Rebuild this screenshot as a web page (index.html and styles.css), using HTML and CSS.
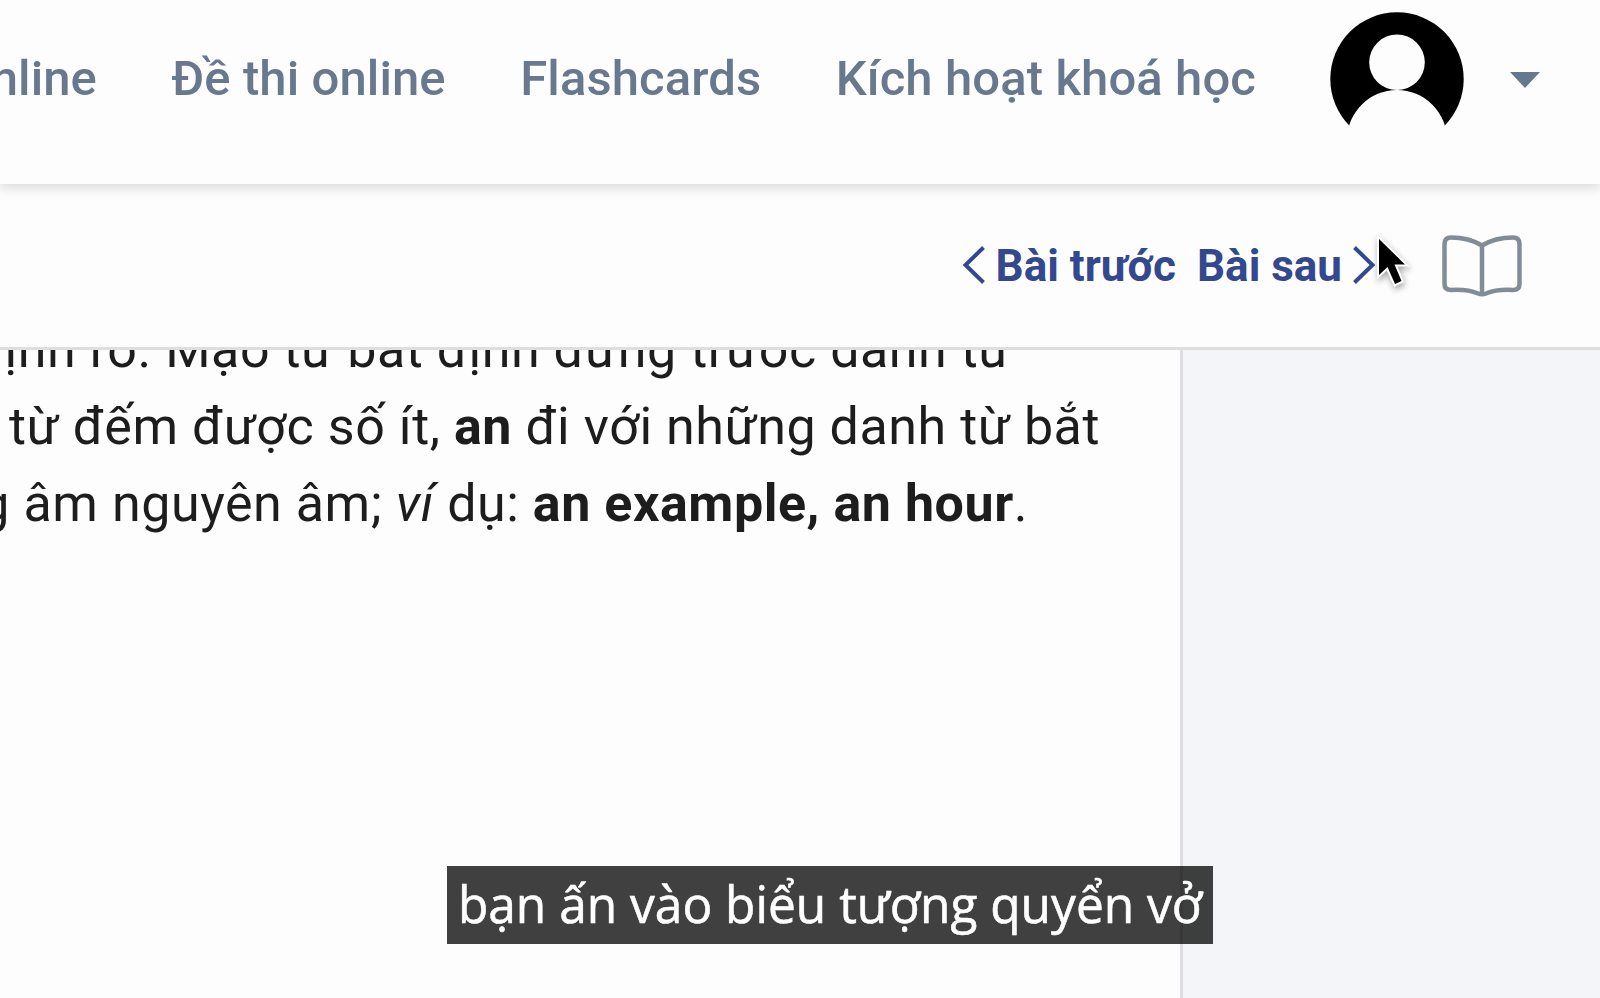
FILE: index.html
```html
<!DOCTYPE html>
<html lang="vi">
<head>
    <meta charset="UTF-8">
    <meta name="viewport" content="width=device-width, initial-scale=1.0">
    <title>Bài học</title>
    <link rel="stylesheet" href="styles.css">
</head>
<body>
    <header class="topbar">
        <nav class="menu">
            <a class="menu-first">online</a>
            <a class="menu-exam">Đề thi online</a>
            <a class="menu-cards">Flashcards</a>
            <a class="menu-active">Kích hoạt khoá học</a>
        </nav>
        <svg class="avatar" viewBox="0 0 134 134">
            <circle cx="67" cy="67" r="66.7" fill="#000"/>
            <circle cx="67" cy="50.3" r="27.8" fill="#fdfdfd"/>
            <path d="M17 134 V128 A50 50 0 0 1 117 128 V134 Z" fill="#fdfdfd"/>
        </svg>
        <svg class="caret" viewBox="0 0 30 16"><path d="M0 0H30L15 16Z" fill="#64788f"/></svg>
    </header>

    <div class="lesson-bar">
        <a class="lesson-link">
            <svg class="chevron" viewBox="0 0 24 38"><path d="M21.500 1.500L3.500 19L21.500 36.500"/></svg>
            <span class="prev">Bài trước</span>
        </a>
        <a class="lesson-link">
            <span class="next">Bài sau</span>
            <svg class="chevron" viewBox="0 0 24 38"><path d="M2.500 1.500L20.500 19L2.500 36.500"/></svg>
        </a>
        <svg class="book" viewBox="0 0 80 64">
            <path d="M40 11.500C31 6 19 3.500 9 3.500Q2.500 3.500 2.500 10V50Q2.500 56 9 56C19 55.500 29 56.500 36 59.500Q40 61 44 59.500C51 56.500 61 55.500 71 56Q77.500 56 77.500 50V10Q77.500 3.500 71 3.500C61 3.500 49 6 40 11.500ZM40 11.500V60"/>
        </svg>
    </div>

    <main class="page">
        <article class="content">
            <p class="line line-1">định rõ. Mạo từ bất định đứng trước danh từ</p>
            <p class="line line-2">từ đếm được số ít, <b>an</b> đi với những danh từ bắt</p>
            <p class="line line-3">g âm nguyên âm; <i>ví</i> dụ: <b>an example, an hour</b>.</p>
        </article>
        <aside class="sidebar"></aside>
    </main>

    <div class="subtitle"><span>bạn ấn vào biểu tượng quyển vở</span></div>

    <svg class="cursor" viewBox="0 0 40 60">
        <path d="M6 9V45L14.500 37L22 54L28.500 51L21.500 34.500H32Z"/>
    </svg>
</body>
</html>
```
FILE: styles.css
```css
* {
    box-sizing: border-box;
}
body {
    margin: 0;
    height: 998px;
    overflow: hidden;
    display: flex;
    flex-direction: column;
    font-family: Roboto, "Noto Sans", sans-serif;
    background-color: #fdfdfd;
    position: relative;
}

/* top menu */
.topbar {
    flex: none;
    height: 184px;
    display: flex;
    justify-content: flex-end;
    align-items: flex-start;
    padding-top: 12px;
    padding-right: 60px;
    background-color: #fdfdfd;
    box-shadow: 0 3px 12px 1px rgba(0, 0, 0, 0.14);
    z-index: 2;
}
.menu {
    display: flex;
    gap: 74.5px;
    margin-right: 74px;
    padding-top: 37px;
    font-size: 49px;
    line-height: 60px;
    font-weight: 500;
    letter-spacing: 0.1px;
    color: #67788f;
    white-space: nowrap;
}
.avatar {
    flex: none;
    width: 134px;
    height: 134px;
}
.caret {
    flex: none;
    width: 30px;
    height: 16px;
    margin-top: 60px;
    margin-left: 46px;
}

/* previous / next lesson */
.lesson-bar {
    flex: none;
    height: 166px;
    display: flex;
    justify-content: flex-end;
    padding-top: 50px;
    padding-right: 78px;
    background-color: #fdfdfd;
    border-bottom: 3px solid #dedede;
    z-index: 1;
}
.lesson-link {
    display: flex;
    height: 64px;
    margin-left: 21px;
    font-size: 44px;
    line-height: 64px;
    font-weight: 700;
    color: #33488f;
    white-space: nowrap;
}
.chevron {
    width: 24px;
    height: 38px;
    margin-top: 12px;
    fill: none;
    stroke: #33488f;
    stroke-width: 4;
}
.prev {
    margin-left: 10px;
}
.next {
    margin-right: 10px;
}
.book {
    width: 80px;
    height: 64px;
    margin-left: 66px;
    fill: none;
    stroke: #818c98;
    stroke-width: 4.5;
}

/* lesson text */
.page {
    flex: 1;
    display: flex;
    overflow: hidden;
}
.content {
    width: 1180px;
    flex: none;
    display: flex;
    flex-direction: column;
    align-items: flex-end;
    margin-top: -39.5px;
    color: #1d1d1d;
}
.line {
    margin: 0;
    font-size: 52px;
    line-height: 77.3px;
    letter-spacing: 0.54px;
    white-space: nowrap;
}
.line-1 {
    padding-right: 169px;
}
.line-2 {
    padding-right: 80px;
}
.line-3 {
    padding-right: 152px;
}
.sidebar {
    flex: 1;
    background-color: #f4f5f8;
    border-left: 3px solid #dedfe1;
}

/* video caption */
.subtitle {
    position: absolute;
    left: 447px;
    top: 866px;
    width: 766px;
    height: 78px;
    display: flex;
    justify-content: center;
    background-color: rgba(0, 0, 0, 0.75);
    color: #fff;
    font-family: "Open Sans", sans-serif;
    font-size: 52px;
    font-weight: 500;
    line-height: 74px;
    white-space: nowrap;
    z-index: 3;
}
.subtitle span {
    transform: scaleX(0.954);
    -webkit-text-stroke: 0.6px #fff;
}

.cursor {
    position: absolute;
    left: 1373px;
    top: 230px;
    width: 40px;
    height: 60px;
    overflow: visible;
    fill: #000;
    stroke: #fff;
    stroke-width: 4;
    paint-order: stroke;
    filter: drop-shadow(1px 3px 3px rgba(0, 0, 0, 0.35));
    z-index: 4;
}
```
